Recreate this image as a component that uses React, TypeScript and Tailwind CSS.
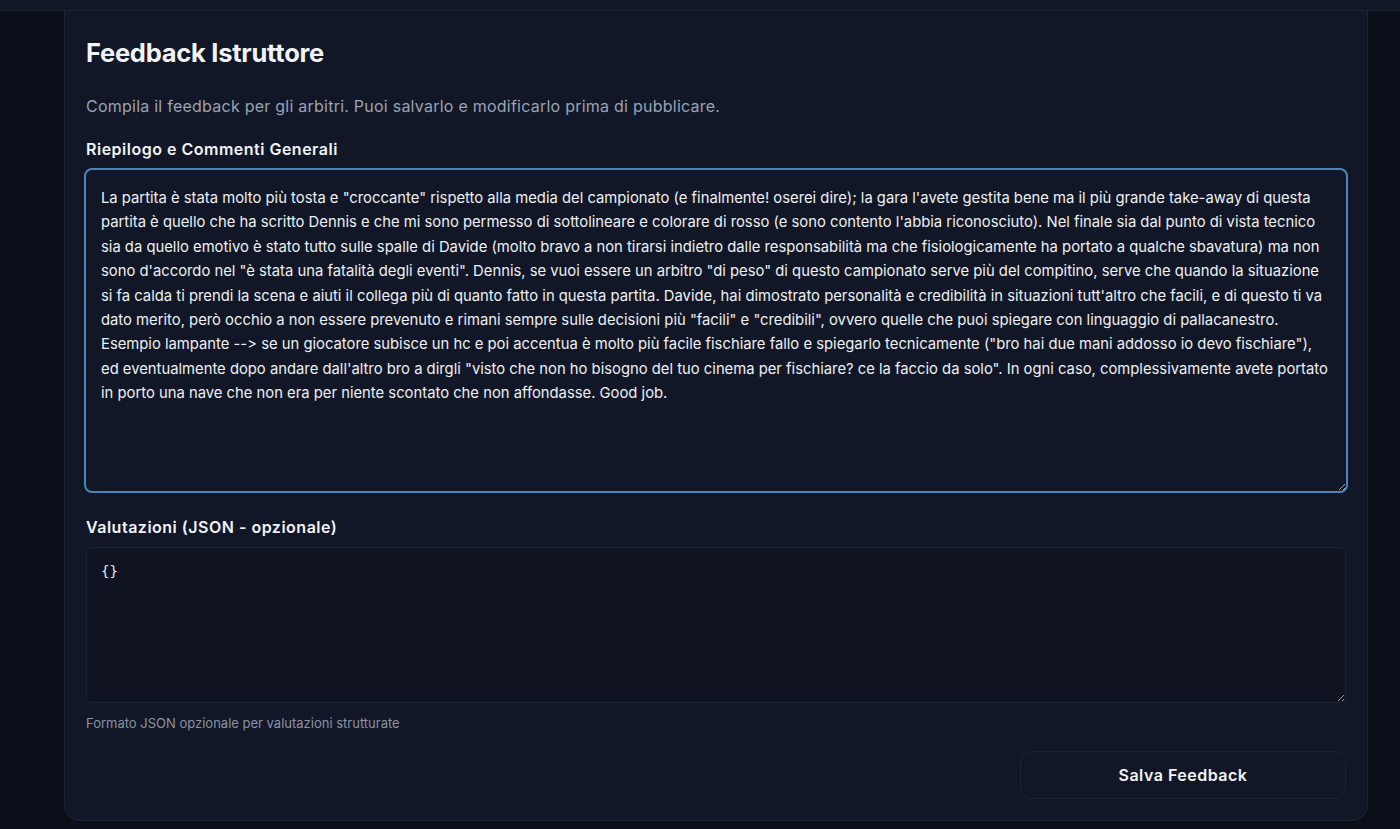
import { useState } from 'react';

// line breaks follow the wrapping of the original field
const SUMMARY = [
  'La partita è stata molto più tosta e "croccante" rispetto alla media del campionato (e finalmente! oserei dire); la gara l\'avete gestita bene ma il più grande take-away di questa',
  'partita è quello che ha scritto Dennis e che mi sono permesso di sottolineare e colorare di rosso (e sono contento l\'abbia riconosciuto). Nel finale sia dal punto di vista tecnico',
  'sia da quello emotivo è stato tutto sulle spalle di Davide (molto bravo a non tirarsi indietro dalle responsabilità ma che fisiologicamente ha portato a qualche sbavatura) ma non',
  'sono d\'accordo nel "è stata una fatalità degli eventi". Dennis, se vuoi essere un arbitro "di peso" di questo campionato serve più del compitino, serve che quando la situazione',
  'si fa calda ti prendi la scena e aiuti il collega più di quanto fatto in questa partita. Davide, hai dimostrato personalità e credibilità in situazioni tutt\'altro che facili, e di questo ti va',
  'dato merito, però occhio a non essere prevenuto e rimani sempre sulle decisioni più "facili" e "credibili", ovvero quelle che puoi spiegare con linguaggio di pallacanestro.',
  'Esempio lampante --> se un giocatore subisce un hc e poi accentua è molto più facile fischiare fallo e spiegarlo tecnicamente ("bro hai due mani addosso io devo fischiare"),',
  'ed eventualmente dopo andare dall\'altro bro a dirgli "visto che non ho bisogno del tuo cinema per fischiare? ce la faccio da solo". In ogni caso, complessivamente avete portato',
  'in porto una nave che non era per niente scontato che non affondasse. Good job.',
].join('\n');

export default function App() {
  const [summary, setSummary] = useState(SUMMARY);
  const [ratings, setRatings] = useState('{}');

  return (
    <div className="min-h-screen bg-[#0b0f1a] font-['Inter',sans-serif] text-gray-100 [font-feature-settings:'calt'_0,'liga'_0]">
      <div className="h-[11px] border-b border-[#1c2333] bg-[#111726]" />
      <div className="pb-2 pl-16 pr-8">
        <div className="rounded-b-2xl border border-t-0 border-[#1c2333] bg-[#111726] px-[21px] pb-[21px] pt-[26px]">
          <h2 className="text-[25.5px] font-bold leading-8 tracking-[-0.01em] text-[#f1f3f7]">Feedback Istruttore</h2>
          <p className="mt-[25px] text-[16px] leading-6 tracking-[0.24px] text-[#9ba3b4]">
            Compila il feedback per gli arbitri. Puoi salvarlo e modificarlo prima di pubblicare.
          </p>

          <label className="mt-[19px] block text-[16px] font-semibold leading-6 tracking-[0.5px] text-[#f1f3f7]">
            Riepilogo e Commenti Generali
          </label>
          <textarea
            value={summary}
            wrap="off"
            onChange={(e) => setSummary(e.target.value)}
            className="mt-[7px] -mx-[2px] block h-[325px] w-[calc(100%+4px)] resize-y overflow-hidden rounded-lg border-2 border-[#4a86b8] bg-[#111726] px-[15px] pb-[12px] pt-[16px] text-[14.8px] leading-[24.4px] text-[#eef0f4] outline-none [font-feature-settings:'calt'_0,'liga'_0]"
          />

          <label className="mt-[22px] block text-[16px] font-semibold leading-6 tracking-[0.5px] text-[#f1f3f7]">
            Valutazioni (JSON - opzionale)
          </label>
          <textarea
            value={ratings}
            onChange={(e) => setRatings(e.target.value)}
            className="mt-2 block h-[156px] w-full resize-y rounded-md border border-[#1c2333] bg-[#0f1420] px-[14px] py-[11px] font-['DejaVu_Sans_Mono',monospace] text-[14px] leading-6 text-[#e5e7eb] outline-none"
          />
          <p className="mt-[12px] text-[13px] leading-4 text-[#8b93a4]">
            Formato JSON opzionale per valutazioni strutturate
          </p>

          <div className="mt-[20px] flex justify-end">
            <button className="h-12 w-[326px] rounded-xl border border-[#1c2333] bg-[#111726] text-[16px] font-semibold tracking-[0.5px] text-[#f1f3f7]">
              Salva Feedback
            </button>
          </div>
        </div>
      </div>
    </div>
  );
}
